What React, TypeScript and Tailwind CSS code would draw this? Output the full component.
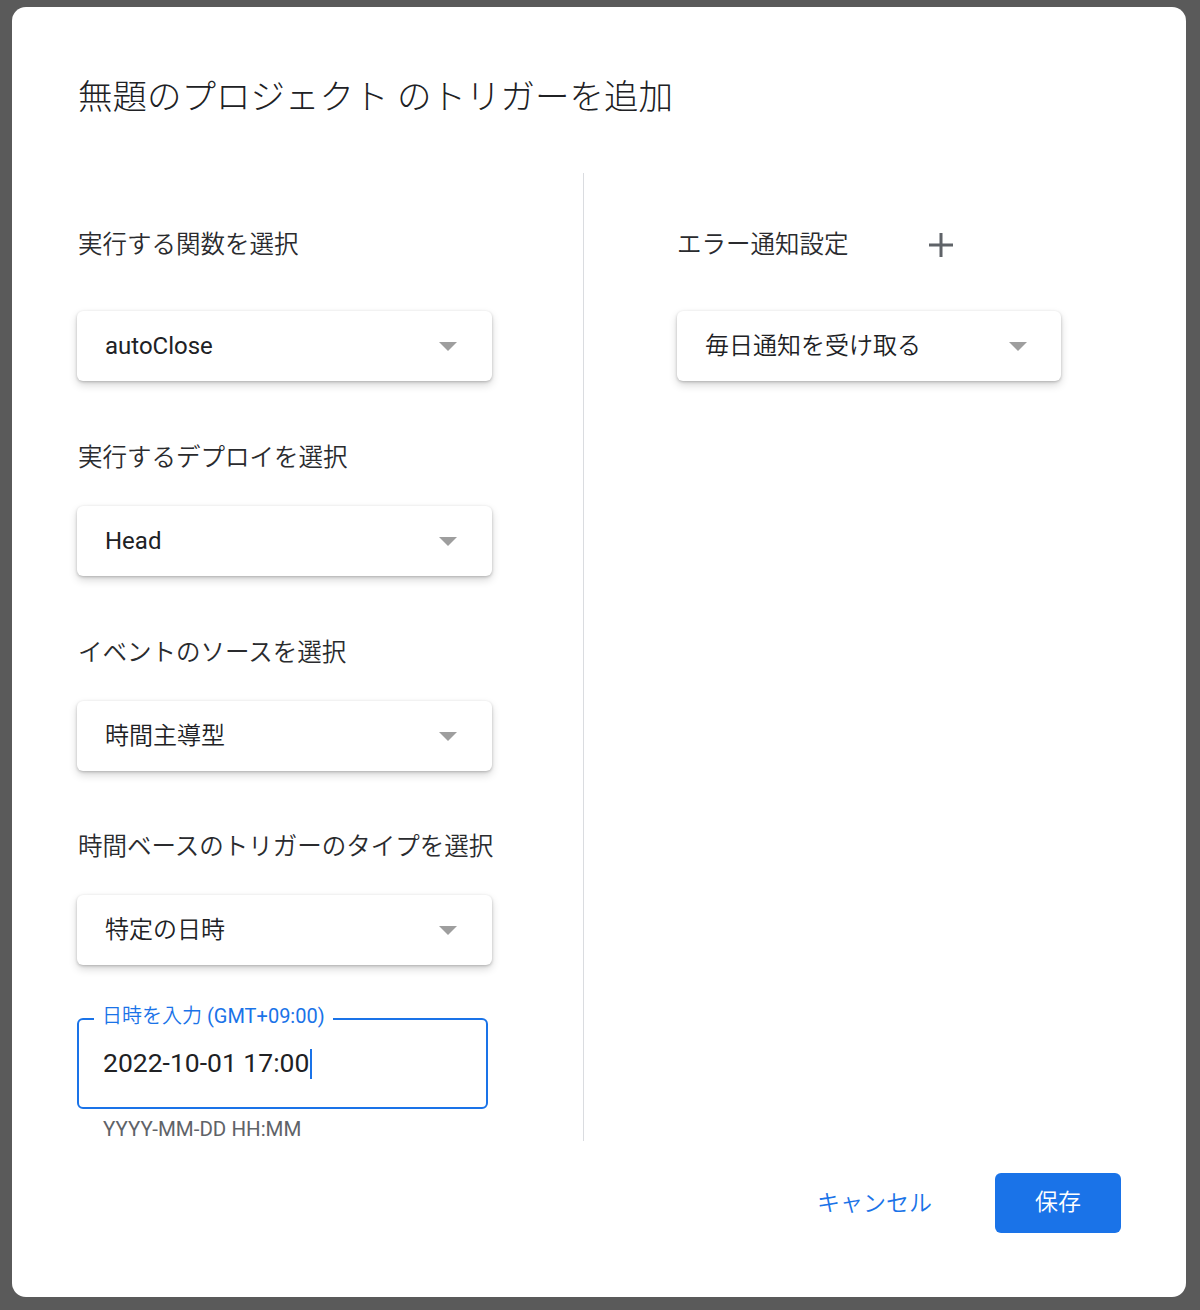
const FONT = "font-['Roboto','Noto_Sans_CJK_JP',sans-serif]"

function Arrow() {
  return (
    <svg width="18" height="9" viewBox="0 0 18 9" className="shrink-0">
      <path d="M0 0 L18 0 L9 9 Z" fill="#9e9e9e" />
    </svg>
  )
}

function Select({
  value,
  width,
  pr,
  cjk = false,
  shift = true,
}: {
  value: string
  width: string
  pr: string
  cjk?: boolean
  shift?: boolean
}) {
  return (
    <div
      className={`${shift ? "-ml-px" : ""} flex h-[70px] ${width} items-center justify-between rounded-[6px] bg-white pl-[28px] ${pr} shadow-[0_1px_3px_rgba(0,0,0,0.22),0_4px_9px_rgba(0,0,0,0.16)]`}
    >
      <span className={`text-[24px] leading-none text-[#202124] ${cjk ? "font-[350]" : "font-normal"}`}>
        {value}
      </span>
      <Arrow />
    </div>
  )
}

function Label({ children, className = "" }: { children: React.ReactNode; className?: string }) {
  return (
    <div className={`h-[32px] text-[24.5px] font-[350] leading-[32px] text-[#2a2b2e] ${className}`}>
      {children}
    </div>
  )
}

export default function App() {
  return (
    <div className={`h-[1310px] w-[1200px] bg-[#5a5a5a] pl-[12px] pt-[7px] ${FONT}`}>
      <div className="flex h-[1290px] w-[1174px] flex-col rounded-[14px] bg-white px-[66px]">
        <h1 className="mt-[68px] h-[44px] text-[34.5px] font-light leading-[44px] text-[#202124]">
          無題のプロジェクト のトリガーを追加
        </h1>

        <div className="mt-[54px] flex">
          {/* left column */}
          <div className="flex w-[505px] flex-col">
            <Label className="mt-[56px]">実行する関数を選択</Label>
            <div className="mt-[50px]">
              <Select value="autoClose" width="w-[415px]" pr="pr-[35px]" />
            </div>

            <Label className="mt-[61px]">実行するデプロイを選択</Label>
            <div className="mt-[32px]">
              <Select value="Head" width="w-[415px]" pr="pr-[35px]" />
            </div>

            <Label className="mt-[61px]">イベントのソースを選択</Label>
            <div className="mt-[32px]">
              <Select value="時間主導型" width="w-[415px]" pr="pr-[35px]" cjk />
            </div>

            <Label className="mt-[60px]">時間ベースのトリガーのタイプを選択</Label>
            <div className="mt-[32px]">
              <Select value="特定の日時" width="w-[415px]" pr="pr-[35px]" cjk />
            </div>

            <div className="relative -ml-px mt-[53px] flex h-[91px] w-[411px] items-center rounded-[6px] border-2 border-[#1a73e8] pl-[24px]">
              <span className="absolute left-[15px] top-[-16px] bg-white px-[8px] text-[20px] leading-[24px] text-[#1a73e8]">
                <span className="font-[350]">日時を入力</span> (GMT+09:00)
              </span>
              <span className="text-[26.5px] leading-none text-[#202124]">2022-10-01 17:00</span>
              <span className="ml-px h-[30px] w-[2px] bg-[#1a73e8]" />
            </div>
            <div className="mt-[8px] pl-[25px] text-[20.5px] leading-[24px] text-[#5f6368]">
              YYYY-MM-DD HH:MM
            </div>
          </div>

          {/* right column */}
          <div className="flex flex-1 flex-col border-l border-[#dadce0] pl-[93px]">
            <div className="mt-[56px] flex items-center">
              <Label>エラー通知設定</Label>
              <svg width="26" height="26" viewBox="0 0 26 26" className="ml-[79px]">
                <path d="M13 1 V25 M1 13 H25" stroke="#5f6368" strokeWidth="3" />
              </svg>
            </div>
            <div className="mt-[50px]">
              <Select value="毎日通知を受け取る" width="w-[384px]" pr="pr-[34px]" cjk shift={false} />
            </div>
          </div>
        </div>

        <div className="-mr-px mt-[32px] flex items-center justify-end">
          <button className="text-[23px] font-[350] leading-none text-[#1a73e8]">キャンセル</button>
          <button className="ml-[63px] flex h-[60px] w-[126px] items-center justify-center rounded-[6px] bg-[#1a73e8] text-[23px] font-[350] text-white">
            保存
          </button>
        </div>
      </div>
    </div>
  )
}
